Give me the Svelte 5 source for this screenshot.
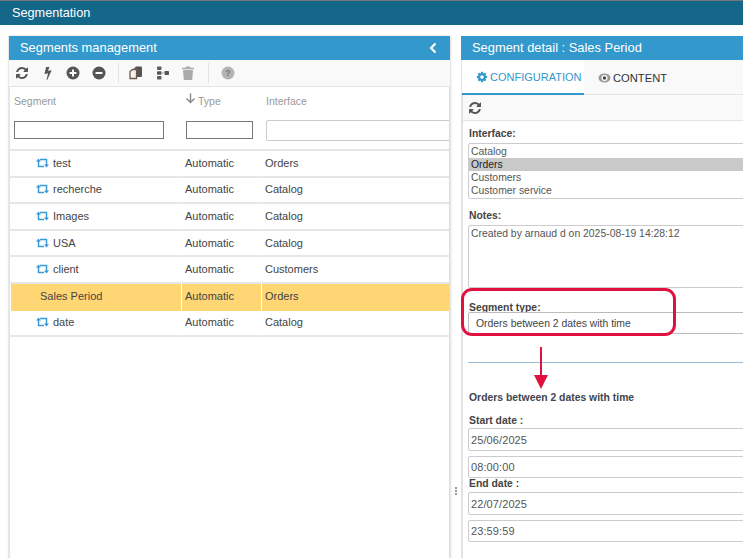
<script>
  const rows = [
    { name: 'test', type: 'Automatic', iface: 'Orders' },
    { name: 'recherche', type: 'Automatic', iface: 'Catalog' },
    { name: 'Images', type: 'Automatic', iface: 'Catalog' },
    { name: 'USA', type: 'Automatic', iface: 'Catalog' },
    { name: 'client', type: 'Automatic', iface: 'Customers' },
    { name: 'Sales Period', type: 'Automatic', iface: 'Orders', selected: true },
    { name: 'date', type: 'Automatic', iface: 'Catalog' }
  ];
  const interfaces = ['Catalog', 'Orders', 'Customers', 'Customer service'];

  const refresh = 'M1639 1056q0 5-1 7-64 268-268 434.5t-478 166.5q-146 0-282.5-55t-243.5-157l-129 129q-19 19-45 19t-45-19-19-45v-448q0-26 19-45t45-19h448q26 0 45 19t19 45-19 45l-137 137q71 66 161 102t187 36q134 0 250-65t186-179q11-17 53-117 8-23 30-23h192q13 0 22.500 9.500t9.500 22.500zm25-800v448q0 26-19 45t-45 19h-448q-26 0-45-19t-19-45 19-45l138-138q-148-137-349-137-134 0-250 65t-186 179q-11 17-53 117-8 23-30 23h-199q-13 0-22.500-9.500t-9.500-22.500v-7q65-268 270-434.500t480-166.500q146 0 284 55.500t245 156.500l130-129q19-19 45-19t45 19 19 45z';
  const bolt = 'M1333 566q18 20 7 44l-540 1157q-13 25-42 25-4 0-14-2-17-5-25.500-19t-4.500-30l197-808-406 101q-4 1-12 1-18 0-31-11-18-15-13-39l201-825q4-14 16-23t28-9h328q19 0 32 12.500t13 29.500q0 8-5 18l-171 463 396-98q8-2 12-2 19 0 34 15z';
  const cog = 'M1152 896q0-106-75-181t-181-75-181 75-75 181 75 181 181 75 181-75 75-181zm512-109v222q0 12-8 23t-20 13l-185 28q-19 54-39 91 35 50 107 138 10 12 10 25t-9 23q-27 37-99 108t-94 71q-12 0-26-9l-138-108q-44 23-91 38-16 136-29 186-7 28-36 28h-222q-14 0-24.500-8.500t-11.500-21.500l-28-184q-49-16-90-37l-141 107q-10 9-25 9-14 0-25-11-126-114-165-168-7-10-7-23 0-12 8-23 15-21 51-66.500t54-70.500q-27-50-41-99l-183-27q-13-2-21-12.500t-8-23.500v-222q0-12 8-23t19-13l186-28q14-46 39-92-40-57-107-138-10-12-10-24 0-10 9-23 26-36 98.500-107.500t94.500-71.500q13 0 26 10l138 107q44-23 91-38 16-136 29-186 7-28 36-28h222q14 0 24.500 8.500t11.500 21.500l28 184q49 16 90 37l142-107q9-9 24-9 13 0 25 10 129 119 165 170 7 8 7 22 0 12-8 23-15 21-51 66.500t-54 70.500q26 50 41 98l183 28q13 2 21 12.500t8 23.500z';
</script>

<div class="page">
  <header class="topbar">Segmentation</header>

  <main class="content">
    <section class="panel left">
      <div class="title">
        <span>Segments management</span>
        <svg class="collapse" width="8" height="12" viewBox="0 0 8 12"><path d="M6.500 1.500 2 6l4.500 4.500" fill="none" stroke="#fff" stroke-width="2.200" /></svg>
      </div>
      <div class="toolbar">
        <svg class="tool" width="14" height="14" viewBox="0 0 1792 1792"><path d={refresh} /></svg>
        <svg class="tool" width="14" height="14" viewBox="0 0 1792 1792"><path d={bolt} /></svg>
        <svg class="tool" width="14" height="14" viewBox="0 0 14 14"><circle cx="7" cy="7" r="6.500" /><path d="M3.500 7h7M7 3.500v7" stroke="#f9f9f9" stroke-width="2" /></svg>
        <svg class="tool" width="14" height="14" viewBox="0 0 14 14"><circle cx="7" cy="7" r="6.500" /><path d="M3.500 7h7" stroke="#f9f9f9" stroke-width="2" /></svg>
        <i class="sep"></i>
        <svg class="tool" width="14" height="14" viewBox="0 0 14 14"><path d="M7 .5h5a1 1 0 0 1 1 1V10a1 1 0 0 1-1 1H5V2.500z" /><path d="M1 5.500 3.500 3.500H7.500V12.500H1z" fill="#f4f1ee" stroke="#6c5a4e" stroke-width="1.300" /></svg>
        <svg class="tool tree" width="14" height="14" viewBox="0 0 14 14"><rect x="1" y="0.500" width="4.500" height="3.400" rx=".8" fill="#6c5a4e" /><rect x="1" y="5.300" width="4.500" height="3.400" rx=".8" /><rect x="1" y="10.100" width="4.500" height="3.400" rx=".8" fill="#6c5a4e" /><rect x="8.500" y="5" width="4.500" height="4" rx=".8" /><path d="M5 7h4" stroke="#aaa" stroke-width="1" /></svg>
        <svg class="tool muted" width="14" height="14" viewBox="0 0 14 14"><path d="M5 .5h4l.6 1.300H13v1.400H1V1.800h3.400zM2 4h10l-.7 9a1 1 0 0 1-1 1H3.700a1 1 0 0 1-1-1z" /></svg>
        <i class="sep"></i>
        <svg class="tool help" width="14" height="14" viewBox="0 0 14 14"><circle cx="7" cy="7" r="6.500" fill="#b4b4b4" /><text x="7" y="10" text-anchor="middle" class="q">?</text></svg>
      </div>

      <div class="table">
        <div class="head">
          <div class="cell"><span class="th">Segment</span><input class="filter dark" /></div>
          <div class="cell">
            <span class="th">
              <svg class="sort" width="11" height="11" viewBox="0 0 11 11"><path d="M5.500 .5v9M1.500 5.500l4 4 4-4" fill="none" stroke="#888" stroke-width="1.400" /></svg>
              <span>Type</span>
            </span>
            <input class="filter dark short" />
          </div>
          <div class="cell"><span class="th">Interface</span><input class="filter soft" /></div>
        </div>
        {#each rows as row}
          <div class="row" class:selected={row.selected}>
            <div class="c name">
              {#if !row.selected}
                <svg class="rt" width="13" height="10" viewBox="0 0 13 10">
                  <path d="M2.500 3V8.500H8M4 1.500H10.500V7" fill="none" stroke="#3a9ad6" stroke-width="1.500" />
                  <path d="M0 3.600 2.500 .5 5 3.600zM8 6.400 10.500 9.500 13 6.400z" fill="#3a9ad6" />
                </svg>
              {/if}
              <span>{row.name}</span>
            </div>
            <div class="c">{row.type}</div>
            <div class="c">{row.iface}</div>
          </div>
        {/each}
      </div>
    </section>

    <div class="splitter"><i></i><i></i><i></i></div>

    <section class="panel right">
      <div class="title">Segment detail : Sales Period</div>
      <div class="tabs">
        <div class="tab active">
          <svg width="12" height="12" viewBox="0 0 1792 1792"><path d={cog} /></svg>
          CONFIGURATION
        </div>
        <div class="tab">
          <svg width="13" height="12" viewBox="0 0 13 12"><ellipse cx="6.500" cy="6" rx="6" ry="4.500" fill="#999" /><circle cx="6.500" cy="6" r="3" fill="#fff" /><circle cx="6.500" cy="6" r="1.700" fill="#444" /></svg>
          CONTENT
        </div>
      </div>
      <div class="subbar">
        <svg width="14" height="14" viewBox="0 0 1792 1792"><path d={refresh} fill="#555" /></svg>
      </div>

      <form class="form">
        <label class="interface-label" for="iface">Interface:</label>
        <div class="listbox" id="iface">
          {#each interfaces as item}
            <div class="opt" class:on={item === 'Orders'}>{item}</div>
          {/each}
        </div>

        <label class="notes-label" for="notes">Notes:</label>
        <textarea id="notes" value="Created by arnaud d on 2025-08-19 14:28:12"></textarea>

        <label class="type-label" for="stype">Segment type:</label>
        <div class="select" id="stype">Orders between 2 dates with time</div>

        <hr />
        <h4>Orders between 2 dates with time</h4>

        <label class="start-label" for="sd">Start date :</label>
        <input id="sd" class="field" value="25/06/2025" />
        <input class="field gap" value="08:00:00" />
        <label class="end-label" for="ed">End date :</label>
        <input id="ed" class="field" value="22/07/2025" />
        <input class="field gap" value="23:59:59" />
      </form>
    </section>

    <!-- annotation drawn on top of the screenshot -->
    <div class="callout"></div>
    <svg class="arrow" width="16" height="44" viewBox="0 0 16 44">
      <path d="M8 0v32" stroke="#e0103f" stroke-width="2" />
      <path d="M1 28h14l-7 14z" fill="#e0103f" />
    </svg>
  </main>
</div>

<style>
  :global(body) {
    margin: 0;
    overflow: hidden;
    background: #fff;
  }

  .page {
    width: 743px;
    height: 558px;
    overflow: hidden;
    font-family: "Liberation Sans", Arial, sans-serif;
    font-size: 11px;
    color: #444;
  }

  .topbar {
    box-sizing: border-box;
    height: 25px;
    border-top: 1px solid #777;
    background: #15678a;
    color: #fff;
    font-size: 12.700px;
    line-height: 24px;
    padding-left: 12px;
  }

  .content {
    position: relative;
    display: flex;
    height: 533px;
    padding: 11px 0 0 9px;
    box-sizing: border-box;
  }

  .panel {
    flex: none;
    background: #fff;
    height: 522px;
  }

  .left {
    width: 441px;
    box-shadow: 1px 0 2px #ddd, -1px 0 1px #e8e8e8;
  }

  .right {
    width: 300px;
    border-left: 2px solid #e2e2e2;
  }

  .title {
    box-sizing: border-box;
    display: flex;
    align-items: center;
    justify-content: space-between;
    height: 24px;
    background: #3398cc;
    color: #fff;
    font-size: 12.900px;
    padding: 0 13px 1px 11px;
  }

  .right .title {
    margin-left: -2px;
    padding-left: 11px;
  }

  .toolbar {
    display: flex;
    align-items: center;
    height: 26px;
    background: #f9f9f9;
    padding-left: 6px;
  }

  .tool {
    flex: none;
    fill: #555;
    margin-right: 11.500px;
  }

  .tool.tree {
    margin-left: 1px;
  }

  .tool.muted {
    fill: #aaa;
  }

  .tool.help {
    margin-left: 2px;
  }

  .q {
    fill: #777;
    font-size: 9px;
    font-weight: bold;
  }

  .sep {
    flex: none;
    width: 1px;
    height: 20px;
    background: #e2e2e2;
    margin: 0 10px 0 1px;
  }

  .table {
    border: 1px solid #e4e4e4;
    border-width: 1px 1px 0 1px;
    border-right-color: #ddd;
    height: 471px;
    overflow: hidden;
  }

  .head,
  .row {
    display: grid;
    grid-template-columns: 171px 80px 1fr;
    box-sizing: border-box;
  }

  .head {
    height: 64px;
    border-bottom: 2px solid #e6e6e6;
  }

  .cell {
    display: flex;
    flex-direction: column;
    padding: 8px 0 0 4px;
    overflow: hidden;
  }

  .cell:nth-child(n + 2) {
    padding-left: 5px;
  }

  .th {
    display: flex;
    align-items: flex-start;
    gap: 2px;
    height: 26px;
    color: #999;
    font-size: 10.500px;
  }

  .sort {
    margin: -2px 0 0 -1px;
  }

  .filter {
    box-sizing: border-box;
    height: 18px;
    padding: 0;
    background: #fff;
    outline: none;
  }

  .filter.dark {
    width: 150px;
    border: 1px solid #777;
    border-radius: 0;
  }

  .filter.short {
    width: 67px;
  }

  .filter.soft {
    width: 220px;
    height: 21px;
    margin-top: -1px;
    border: 1px solid #ccc;
    border-radius: 2px;
  }

  .row {
    height: 26.600px;
    color: #444;
  }

  .c {
    box-sizing: border-box;
    display: flex;
    align-items: center;
    padding-left: 3px;
    border-left: 1px solid #fff;
    border-bottom: 2px solid #e6e6e6;
    padding-bottom: 1px;
    font-size: 11px;
  }

  .name {
    padding-left: 26px;
    border-left: none;
    gap: 4px;
  }

  .selected .c {
    background: #ffd674;
    border-bottom: none;
    padding-bottom: 2px;
  }

  .selected .name {
    padding-left: 29px;
    margin-left: 1px;
  }

  .splitter {
    flex: none;
    width: 11px;
    display: flex;
    flex-direction: column;
    align-items: center;
    gap: 1px;
    padding-top: 451px;
    box-sizing: border-box;
  }

  .splitter i {
    width: 2px;
    height: 2px;
    background: #999;
  }

  .tabs {
    display: flex;
    height: 35px;
    background: #f9f9f9;
    border-bottom: 1px solid #e4e4e4;
    box-sizing: border-box;
  }

  .tab {
    display: flex;
    align-items: center;
    gap: 2px;
    padding: 0 8px 0 14px;
    font-size: 11.200px;
    color: #333;
    box-sizing: border-box;
    height: 35px;
  }

  .tab svg {
    flex: none;
  }

  .tab.active {
    width: 122px;
    margin-left: -1px;
    padding: 0 0 0 14px;
    font-size: 11px;
    color: #3398cc;
    fill: #3398cc;
    border-bottom: 2px solid #3398cc;
    background: #fff;
    white-space: nowrap;
  }

  .subbar {
    display: flex;
    align-items: center;
    height: 26px;
    padding-left: 5px;
    background: #f9f9f9;
    border-bottom: 1px solid #e4e4e4;
    box-sizing: border-box;
  }

  .form {
    display: flex;
    flex-direction: column;
    padding: 0 0 0 5px;
  }

  label {
    display: block;
    font-weight: bold;
    font-size: 10.400px;
    color: #444;
    line-height: 13px;
  }

  .interface-label {
    margin: 6px 0 3px 1px;
  }

  .listbox {
    width: 290px;
    box-sizing: border-box;
    height: 56px;
    border: 1px solid #ccc;
    border-radius: 2px;
    padding-top: 1px;
  }

  .opt {
    height: 13px;
    line-height: 13px;
    padding-left: 2px;
    font-size: 10.400px;
    color: #555;
  }

  .opt.on {
    background: #c9c9c9;
    color: #222;
  }

  .notes-label {
    margin: 10px 0 3px 1px;
  }

  textarea {
    display: block;
    width: 290px;
    height: 63px;
    box-sizing: border-box;
    border: 1px solid #ccc;
    border-radius: 2px;
    padding: 2px;
    resize: none;
    outline: none;
    font: 10.400px "Liberation Sans", Arial, sans-serif;
    color: #555;
  }

  .type-label {
    margin: 13px 0 -2px 1px;
  }

  .select {
    width: 290px;
    height: 22px;
    box-sizing: border-box;
    border: 1px solid #bbb;
    border-radius: 2px;
    padding-left: 7px;
    line-height: 21px;
    font-size: 10.400px;
    color: #444;
  }

  hr {
    width: 290px;
    margin: 28px 0 0;
    border: none;
    border-top: 1px solid #9dbdd4;
  }

  h4 {
    margin: 28px 0 0 1px;
    font-size: 10.400px;
    line-height: 13px;
    font-weight: bold;
    color: #3f4650;
  }

  .start-label {
    margin: 10px 0 1px 1px;
  }

  .end-label {
    margin: -1px 0 2px 1px;
  }

  .field {
    display: block;
    width: 290px;
    height: 23px;
    box-sizing: border-box;
    border: 1px solid #ccc;
    border-radius: 2px;
    padding: 0 2px;
    outline: none;
    font: 11px "Liberation Sans", Arial, sans-serif;
    color: #555;
    letter-spacing: 0.1px;
  }

  .field.gap {
    margin-top: 5px;
    height: 22px;
  }

  .callout {
    position: absolute;
    left: 461px;
    top: 263px;
    width: 215px;
    height: 48px;
    box-sizing: border-box;
    border: 3px solid #e0103f;
    border-radius: 11px;
  }

  .arrow {
    position: absolute;
    left: 533px;
    top: 322px;
  }
</style>
